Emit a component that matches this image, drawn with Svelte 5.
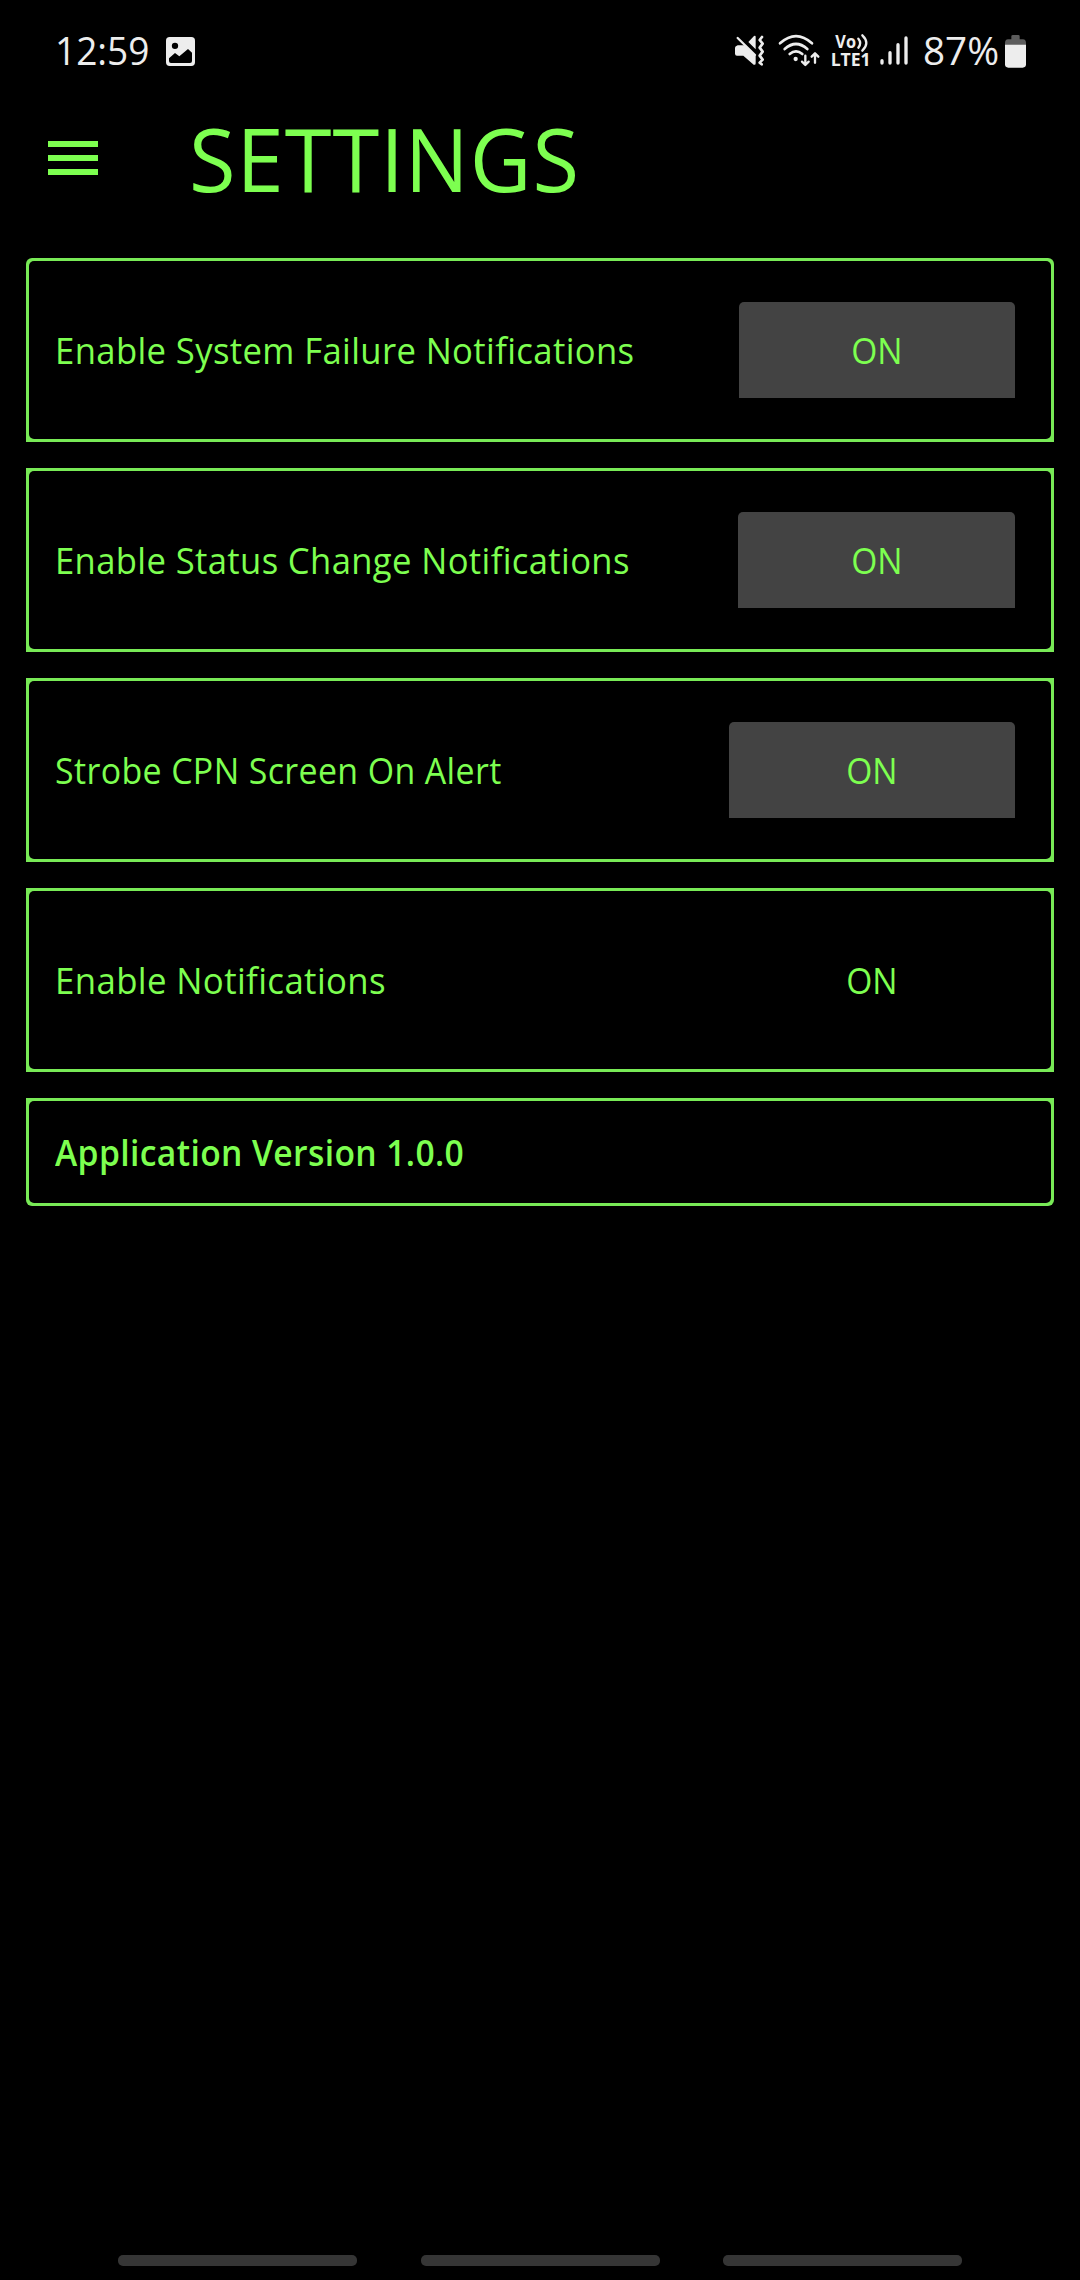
<script>
  const settings = [
    { label: 'Enable System Failure Notifications', stretch: 0.949, width: 276, raised: true },
    { label: 'Enable Status Change Notifications', stretch: 0.948, width: 277, raised: true },
    { label: 'Strobe CPN Screen On Alert', stretch: 0.929, width: 286, raised: true },
    { label: 'Enable Notifications', stretch: 0.953, width: 286, raised: false }
  ];
</script>

<div class="screen">
  <header class="status">
    <span class="clock">12:59</span>
    <svg class="photo" width="29" height="29" viewBox="0 0 87 87">
      <path fill="#ededed" fill-rule="evenodd" d="M11 0H76Q87 0 87 11V76Q87 87 76 87H11Q0 87 0 76V11Q0 0 11 0ZM9 64V72Q9 78 15 78H72Q78 78 78 72V47L66 36L40 58L27 48ZM27 17A9.500 9.500 0 1 0 27 36A9.500 9.500 0 1 0 27 17Z" />
    </svg>
    <svg class="indicators" width="173" height="34" viewBox="0 0 519 102">
      <!-- muted, vibrating speaker -->
      <g fill="#ededed" transform="translate(0 2)">
        <path d="M4 34Q0 36 0 40V57Q0 63 6 63H25L56 90Q62 92 62 86V64L28 32H8ZM40 22L57 4Q62 1 62 7V44Z" />
        <path d="M8 10L60 61" stroke="#ededed" stroke-width="7" stroke-linecap="round" />
        <path d="M81 7L74 16L83 27L74 39L83 51L74 63L83 75L74 84L80 89" fill="none" stroke="#ededed" stroke-width="8" stroke-linecap="round" stroke-linejoin="round" />
      </g>
      <!-- wifi with transfer arrows -->
      <g fill="none" stroke="#ededed" stroke-width="8" stroke-linecap="round" stroke-linejoin="round">
        <path d="M135 28Q183 -15 231 28M149 45Q183 15 217 45M164 60Q183 44 202 60" />
        <path d="M211 65V91M201 83L211 93L221 83M240 86V60M230 68L240 58L250 68" stroke-width="7" />
      </g>
      <circle cx="182" cy="75" r="6.500" fill="#ededed" />
      <text class="tiny" x="301" y="42" textLength="62" lengthAdjust="spacingAndGlyphs" font-size="51">Vo</text>
      <path d="M370 14Q381 27 370 41M382 4Q406 27 382 50" fill="none" stroke="#ededed" stroke-width="7" stroke-linecap="round" />
      <text class="tiny" x="287" y="96" textLength="120" lengthAdjust="spacingAndGlyphs" font-size="54">LTE1</text>
      <!-- signal bars -->
      <path d="M441 80V87M465 56V87M489 32V87M513 12V87" stroke="#ededed" stroke-width="10" stroke-linecap="round" />
    </svg>
    <span class="percent">87%</span>
    <svg class="battery" width="21" height="33" viewBox="0 0 63 99">
      <path fill="#5c5c5c" d="M19 4Q19 0 24 0H40Q44 0 44 4V13H54Q63 14 63 24V30H0V24Q0 14 9 13H19Z" />
      <path fill="#ededed" d="M0 29H63V88Q63 98 53 98H10Q0 98 0 88Z" />
    </svg>
  </header>

  <div class="titlebar">
    <button class="menu" aria-label="Menu"><i></i><i></i><i></i></button>
    <h1>SETTINGS</h1>
  </div>

  <main>
    {#each settings as item}
      <section class="card">
        <div class="inner">
          <span class="label" style="--stretch: {item.stretch}">{item.label}</span>
          <button class="toggle" class:raised={item.raised} style="width: {item.width}px"><span>ON</span></button>
        </div>
      </section>
    {/each}
    <section class="card version">
      <div class="inner"><strong>Application Version 1.0.0</strong></div>
    </section>
  </main>

  <nav><i></i><i></i><i></i></nav>
</div>

<style>
  :global(body) { margin: 0; background: #000; }
  * { box-sizing: border-box; }
  .screen {
    width: 1080px;
    height: 2280px;
    display: flex;
    flex-direction: column;
    background: #000;
    color: #7dff50;
    font-family: "Open Sans", "Noto Sans", sans-serif;
    overflow: hidden;
  }
  .status {
    height: 102px;
    display: flex;
    align-items: center;
    padding: 0 54px 0 55px;
    color: #ededed;
    font-size: 39px;
    line-height: 50px;
    flex: none;
  }
  .status span { white-space: nowrap; transform-origin: left; margin-bottom: 3px; }
  .clock { width: 111px; transform: scaleX(0.95); }
  .percent { width: 82px; margin-left: 15px; transform: scaleX(0.99); }
  .indicators { margin-left: auto; flex: none; overflow: visible; }
  .battery { flex: none; }
  .tiny { fill: #ededed; font-weight: 700; }
  .titlebar { height: 156px; display: flex; flex: none; padding-left: 48px; }
  button { border: 0; padding: 0; background: none; color: inherit; font: inherit; }
  .menu { width: 50px; height: 34px; margin-top: 39px; display: flex; flex-direction: column; justify-content: space-between; }
  .menu i { width: 50px; height: 6px; background: #7dff50; }
  h1 {
    margin: 0 0 0 91px;
    font-size: 88px;
    font-weight: 400;
    line-height: 113px;
    letter-spacing: 1px;
    transform: scaleX(0.965);
    transform-origin: left;
  }
  main { display: flex; flex-direction: column; gap: 26px; padding: 0 26px; flex: 1; }
  .card {
    height: 184px;
    padding: 3px;
    background: #78ea56;
    font-size: 36.500px;
    line-height: 50px;
  }
  .inner {
    height: 100%;
    display: flex;
    align-items: center;
    justify-content: space-between;
    padding: 0 36px 0 26px;
    background: #000;
    border-radius: 5px;
  }
  .card:first-child { border-radius: 6px 6px 0 0; }
  .card:last-child { border-radius: 0 0 6px 6px; }
  .version { height: 108px; }
  .label, strong { white-space: nowrap; transform: scaleX(var(--stretch, 0.922)); transform-origin: left; letter-spacing: 0.400px; }
  strong { font-weight: 600; }
  .toggle { height: 96px; flex: none; }
  .toggle span { display: inline-block; transform: scaleX(0.92); }
  .raised { background: #434343; border-radius: 5px 5px 0 0; }
  nav { height: 40px; display: flex; gap: 63.500px; justify-content: center; padding-top: 15px; flex: none; }
  nav i { width: 239px; height: 11px; border-radius: 5px; background: #353535; }
</style>
